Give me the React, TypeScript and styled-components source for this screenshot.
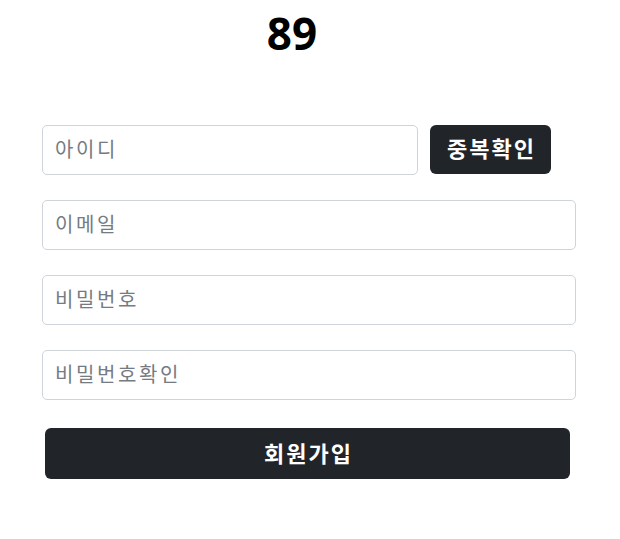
import React from "react";
import styled, { createGlobalStyle } from "styled-components";

const GlobalStyle = createGlobalStyle`
  * { box-sizing: border-box; }
  body {
    margin: 8px;
    background: #ffffff;
    font-family: "Noto Sans", "Noto Sans CJK KR", sans-serif;
    color: #212529;
  }
`;

const Page = styled.div`
  display: flex;
  flex-direction: column;
  padding: 0 36px 0 34px;
`;

const Title = styled.h1`
  margin: 0;
  padding-right: 34px;
  text-align: center;
  font-family: "Noto Sans", "Noto Sans CJK KR", sans-serif;
  font-size: 44px;
  font-weight: 700;
  line-height: 50px;
  color: #000000;
`;

const Form = styled.form`
  display: flex;
  flex-direction: column;
  gap: 25px;
  margin-top: 67px;
`;

const Row = styled.div`
  display: flex;
  align-items: center;
  gap: 12px;
`;

const Input = styled.input<{ $width?: number }>`
  width: ${(p) => (p.$width ? `${p.$width}px` : "100%")};
  height: 50px;
  padding: 0 12px 4px;
  border: 1px solid #ced4da;
  border-radius: 5px;
  background: #ffffff;
  font-family: "Noto Sans CJK KR", sans-serif;
  font-size: 20px;
  letter-spacing: 2.6px;
  color: #212529;
  outline: none;
  &::placeholder {
    color: #757b82;
  }
`;

const DarkButton = styled.button<{ $wide?: boolean }>`
  display: flex;
  align-items: center;
  justify-content: center;
  height: ${(p) => (p.$wide ? "51px" : "49px")};
  width: ${(p) => (p.$wide ? "525px" : "121px")};
  margin: ${(p) => (p.$wide ? "3px 0 0 3px" : "-2px 0 0 0")};
  padding: 0 0 4px 2px;
  border: none;
  border-radius: 6px;
  background: #212529;
  color: #ffffff;
  font-family: "Noto Sans CJK KR", sans-serif;
  font-size: 22px;
  font-weight: 700;
  letter-spacing: 2px;
  cursor: pointer;
`;

export default function App() {
  return (
    <>
      <GlobalStyle />
      <Page>
        <Title>89</Title>
        <Form onSubmit={(e) => e.preventDefault()}>
          <Row>
            <Input $width={376} placeholder="아이디" />
            <DarkButton type="button">중복확인</DarkButton>
          </Row>
          <Input placeholder="이메일" />
          <Input type="password" placeholder="비밀번호" />
          <Input type="password" placeholder="비밀번호확인" />
          <DarkButton $wide type="submit">회원가입</DarkButton>
        </Form>
      </Page>
    </>
  );
}
